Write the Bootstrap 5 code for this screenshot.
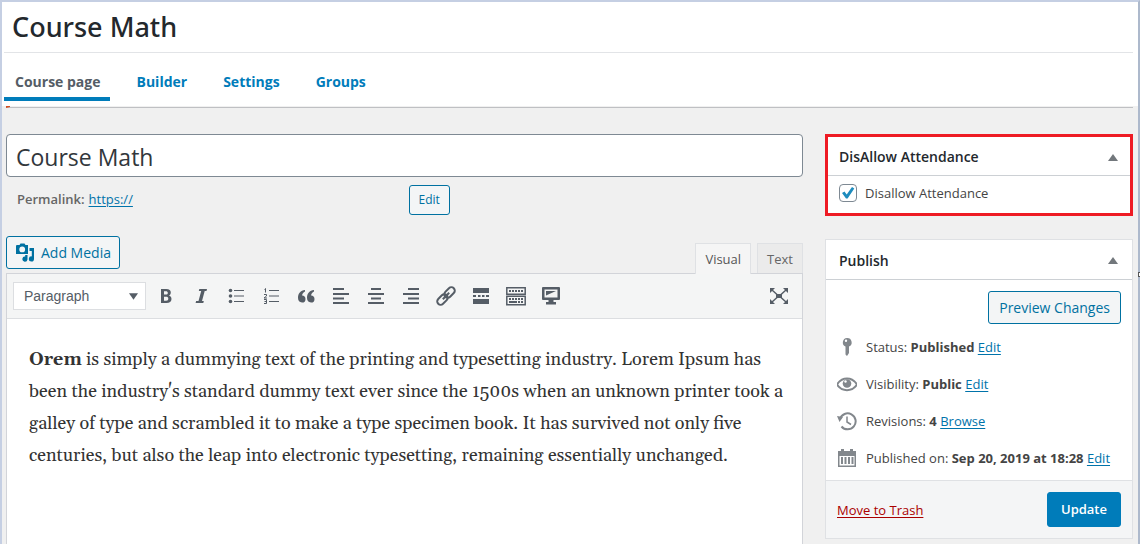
<!DOCTYPE html>
<html lang="en">
<head>
<meta charset="utf-8">
<meta name="viewport" content="width=device-width, initial-scale=1">
<title>Course Math</title>
<link href="https://cdn.jsdelivr.net/npm/bootstrap@5.3.0/dist/css/bootstrap.min.css" rel="stylesheet">
<style>
  body { font-family: "Open Sans", "Noto Sans", sans-serif; font-size: 13px; line-height: 20px; color: #444; background: #f0f0f0; }
  a { color: #0073aa; text-underline-offset: 2px; }
  .shell { min-height: 100vh; border: solid #c5cfe3; border-width: 2px 2px 0 2px; border-right-color: #adb9cc; }
  .resize-handle { position: absolute; right: -2px; top: 270px; width: 2px; height: 5px; background: #fff; border: 1px solid #555; border-right: 0; }
  .page-head { background: #fff; height: 104px; }
  .page-head h1 { font-family: "Noto Sans", "Open Sans", sans-serif; font-size: 27px; line-height: 50px; font-weight: 500; color: #23282d; padding-left: 10px; }
  .course-tabs { border-top: 1px solid #e2e4e7; margin: 0 5px 0 2px; gap: 16px; }
  .course-tabs .nav-link { padding: 18px 9px 5px 11px; font-size: 14px; line-height: 21px; font-weight: 700; color: #007cba; border-bottom: 4px solid transparent; }
  .course-tabs .nav-link.active { color: #555d66; border-color: #007cba; }
  .notice-strip { height: 2px; margin: 0 5px 0 4px; border-bottom: 1px solid #bfc0c3; border-left: 4px solid #d54e21; }
  .content { padding: 26px 5px 0 4px; gap: 22px; }
  .main-col { min-width: 0; }
  .side { width: 308px; }
  .title-input { height: 43px; padding: 2px 9px 0; font-size: 23px; color: #32373c; border: 1px solid #7e8993; border-radius: 4px; }
  .permalink { padding: 8px 0 0 11px; height: 59px; font-weight: 600; color: #666; }
  .permalink-url { width: 320px; font-weight: 400; }
  .btn-line { --bs-btn-font-size: 14px; --bs-btn-color: #0071a1; --bs-btn-border-color: #0071a1; --bs-btn-bg: #f3f5f6; --bs-btn-border-radius: 3px; --bs-btn-line-height: 21px; --bs-btn-padding-x: 10px; --bs-btn-padding-y: 5px; --bs-btn-hover-color: #016087; --bs-btn-hover-bg: #f1f1f1; --bs-btn-hover-border-color: #016087; }
  .btn-slim { --bs-btn-font-size: 12px; --bs-btn-padding-x: 9px; --bs-btn-padding-y: 4px; --bs-btn-line-height: 20px; }
  .btn-media { --bs-btn-padding-x: 8px; }
  .btn-update { --bs-btn-font-size: 13px; --bs-btn-line-height: 21px; --bs-btn-padding-x: 13px; --bs-btn-padding-y: 6px; --bs-btn-color: #fff; --bs-btn-bg: #007cba; --bs-btn-border-color: #007cba; --bs-btn-hover-color: #fff; --bs-btn-hover-bg: #0071a1; --bs-btn-border-radius: 3px; --bs-btn-font-weight: 600; }
  .editor-head { height: 37px; }
  .mode-tabs { gap: 6px; }
  .mode-tab { height: 30px; padding: 0 9px; font-size: 13px; color: #666; background: #ebebeb; border: 1px solid #dfe1e4; border-bottom: 0; }
  .mode-tab.current { height: 31px; margin-bottom: -1px; color: #555; background: #f5f5f5; position: relative; }
  .editor { border: 1px solid #d2d4d9; border-bottom: 0; background: #fff; }
  .toolbar { height: 45px; background: #f4f5f5; border-bottom: 1px solid #dcdee1; padding: 0 13px 0 6px; }
  .format-select { width: 133px; height: 28px; padding: 0 10px; font-size: 14px; line-height: 26px; font-family: "Liberation Sans", sans-serif; color: #555d66; background-color: #fff; border: 1px solid #dcdee1; border-radius: 0; background-image: url("data:image/svg+xml,%3Csvg xmlns='http://www.w3.org/2000/svg' viewBox='0 0 10 7'%3E%3Cpath fill='%23555d66' d='M0 0h10L5 7z'/%3E%3C/svg%3E"); background-size: 9px 7px; background-position: right 7px center; }
  .tools { margin-left: 10px; gap: 15px; }
  .tool { border: 0; padding: 0; background: none; width: 20px; height: 20px; color: #555d66; line-height: 0; }
  .prose { padding: 25px 16px 24px 22px; font: 18px/32px Gelasio, Georgia, "Liberation Serif", serif; color: #333; }
  .panel { background: #fff; border: 1px solid #dfe1e4; }
  .panel-marked { border: 3px solid #ee1b24; margin-bottom: 23px; }
  .panel h2 { font-size: 14px; line-height: 20px; font-weight: 600; color: #23282d; }
  .panel-title { height: 40px; padding: 2px 14px 0 13px; border-bottom: 1px solid #ccd0d4; }
  .panel-marked .panel-title { height: 39px; padding: 2px 12px 0 11px; }
  .toggle { border: 0; background: none; padding: 0; line-height: 0; }
  .attendance { height: 37px; padding: 0 11px; gap: 8px; }
  .attendance .form-check-input { width: 18px; height: 18px; border: 1px solid #7e8993; border-radius: 4px; }
  .attendance .form-check-input:checked { background-color: #fff; background-size: 16px; background-image: url("data:image/svg+xml,%3Csvg xmlns='http://www.w3.org/2000/svg' viewBox='0 0 16 16'%3E%3Cpath fill='%231e8cbe' d='M2 8 4.500 6.500 6.700 9.500 12 2l2.300 1.400L7.600 13.500H6z'/%3E%3C/svg%3E"); }
  .preview-row { padding: 11px 11px 12px; }
  .publish-list { padding: 0 11px 12px; gap: 16px; }
  .publish-row { gap: 9px; height: 21px; }
  .publish-row svg { flex: none; }
  .publish-foot { background: #f4f5f6; border-top: 1px solid #dfe1e4; padding: 11px; }
  .trash { color: #a00; }
</style>
</head>
<body>
<div class="shell d-flex flex-column position-relative">
  <span class="resize-handle"></span>
  <header class="page-head">
    <h1 class="m-0">Course Math</h1>
    <nav class="nav course-tabs">
      <a class="nav-link active" href="#">Course page</a>
      <a class="nav-link" href="#">Builder</a>
      <a class="nav-link" href="#">Settings</a>
      <a class="nav-link" href="#">Groups</a>
    </nav>
  </header>
  <div class="notice-strip"></div>
  <main class="content d-flex flex-grow-1">
    <section class="main-col d-flex flex-column flex-grow-1">
      <input class="form-control title-input" type="text" value="Course Math" aria-label="Title">
      <div class="permalink d-flex align-items-start">
        <span class="pt-1 me-1">Permalink:</span>
        <span class="permalink-url pt-1"><a href="#">https://</a></span>
        <button type="button" class="btn btn-line btn-slim">Edit</button>
      </div>
      <div class="editor-head d-flex align-items-start justify-content-between">
        <button type="button" class="btn btn-line btn-media d-flex align-items-center gap-1">
          <svg width="22" height="20" viewBox="0 0 22 20" fill="currentColor"><path fill-rule="evenodd" d="M3 2h1.500l1-1.500h4L10.500 2H13v9H1V3a1 1 0 0 1 1-1zM7.200 3.500a2.900 2.900 0 1 0 0 5.800 2.900 2.900 0 0 0 0-5.800z"/><path d="M14.500 5H19v11a2.600 2.600 0 1 1-2.200-2.600V8h-2.300zM12.500 12v4.500a2.600 2.600 0 1 1-2.300-3V12z"/></svg>
          <span>Add Media</span>
        </button>
        <div class="mode-tabs d-flex align-items-end align-self-end">
          <button type="button" class="mode-tab current">Visual</button>
          <button type="button" class="mode-tab">Text</button>
        </div>
      </div>
      <div class="editor flex-grow-1">
        <div class="toolbar d-flex align-items-center">
          <select class="form-select format-select" aria-label="Format"><option>Paragraph</option><option>Heading 1</option></select>
          <div class="tools d-flex">
            <button type="button" class="tool" aria-label="Bold"><svg width="20" height="20" viewBox="0 0 20 20" fill="currentColor"><path fill-rule="evenodd" d="M5 3h5.200c3.200 0 4.600 1.300 4.600 3.500 0 1.500-.7 2.700-2 3.100 1.700.4 2.700 1.600 2.700 3.400 0 2.600-1.900 4-5 4H5zm3 2.300v3.300h1.900c1.200 0 1.900-.6 1.900-1.700s-.7-1.600-2-1.600zm0 5.500v3.900h2.100c1.500 0 2.200-.7 2.200-2s-.8-1.900-2.300-1.900z"/></svg></button>
            <button type="button" class="tool" aria-label="Italic"><svg width="20" height="20" viewBox="0 0 20 20" fill="currentColor"><path d="M8.300 3H16l-.5 2h-1.800l-2.700 10h1.800l-.5 2H4.600l.5-2h2.400l2.700-10H7.800z"/></svg></button>
            <button type="button" class="tool" aria-label="Bulleted list"><svg width="20" height="20" viewBox="0 0 20 20" fill="currentColor"><circle cx="4.500" cy="4.500" r="1.800"/><circle cx="4.500" cy="10" r="1.800"/><circle cx="4.500" cy="15.500" r="1.800"/><path d="M8 4h10v1H8zM8 9.500h10v1H8zM8 15h10v1H8z"/></svg></button>
            <button type="button" class="tool" aria-label="Numbered list"><svg width="20" height="20" viewBox="0 0 20 20" fill="currentColor"><path d="M8 4h10v1H8zM8 9.500h10v1H8zM8 15h10v1H8z"/><path fill="none" stroke="currentColor" d="M3.500 3.500l1-1v4M3 8.500h2.500V10L3 12h3M3 13.500h2.500v4H3M3.500 15.500h2"/></svg></button>
            <button type="button" class="tool" aria-label="Quote"><svg width="20" height="20" viewBox="0 0 20 20" fill="currentColor"><path id="q" d="M9 4C4.500 4.600 2 7.500 2 11.800 2 14.600 3.500 16.500 6 16.500a3.500 3.500 0 0 0 3.500-3.600c0-2-1.300-3.300-3.400-3.400C6.200 7.600 7.300 6.200 9 5.400z"/><use href="#q" x="9"/></svg></button>
            <button type="button" class="tool" aria-label="Align left"><svg width="20" height="20" viewBox="0 0 20 20" stroke="currentColor" stroke-width="2"><path d="M2 3h11M2 8h16M2 12.500h11M2 17h16"/></svg></button>
            <button type="button" class="tool" aria-label="Align center"><svg width="20" height="20" viewBox="0 0 20 20" stroke="currentColor" stroke-width="2"><path d="M5 3h10M2 8h16M5 12.500h10M2 17h16"/></svg></button>
            <button type="button" class="tool" aria-label="Align right"><svg width="20" height="20" viewBox="0 0 20 20" stroke="currentColor" stroke-width="2"><path d="M7 3h11M2 8h16M7 12.500h11M2 17h16"/></svg></button>
            <button type="button" class="tool" aria-label="Link"><svg width="20" height="20" viewBox="0 0 20 20" fill="none" stroke="currentColor" stroke-width="2"><g transform="rotate(-45 10 10)"><rect x="-1" y="6.600" width="12" height="6.800" rx="3.400"/><rect x="9" y="6.600" width="12" height="6.800" rx="3.400"/><path d="M5.500 10h9"/></g></svg></button>
            <button type="button" class="tool" aria-label="Read more"><svg width="20" height="20" viewBox="0 0 20 20" fill="currentColor"><path d="M2 2h16v5H2zM2 9h3v2H2zM7 9h2.500v2H7zM11 9h2.500v2H11zM15 9h3v2h-3zM2 13h16v5H2z"/></svg></button>
            <button type="button" class="tool" aria-label="Toolbar toggle"><svg width="20" height="20" viewBox="0 0 20 20" fill="none" stroke="currentColor"><path stroke-width="1.500" d="M.8 1.800h18.400v6.400H.8zM.8 10.300h18.400v8.400H.8z"/><path stroke-width="2" stroke-dasharray="2 1" d="M3 5h14M3 13h14"/><path stroke-width="2" d="M3 16h8M12 16h2M15 16h2"/></svg></button>
            <button type="button" class="tool" aria-label="Preview"><svg width="20" height="20" viewBox="0 0 20 20" fill="currentColor"><path fill-rule="evenodd" d="M2 1h16a1 1 0 0 1 1 1v11a1 1 0 0 1-1 1h-5.500v2H15v2.500H5V16h2.500v-2H2a1 1 0 0 1-1-1V2a1 1 0 0 1 1-1zm1.500 2.500v8h13v-8z"/><path d="M5 5h10L5 9.500z"/></svg></button>
          </div>
          <button type="button" class="tool ms-auto" aria-label="Fullscreen"><svg width="20" height="20" viewBox="0 0 20 20" fill="currentColor"><path d="M7 8h6v4H7zM1 2h5L1 7zM19 2v5l-5-5zM1 18v-5l5 5zM19 18h-5l5-5z"/><path stroke="currentColor" stroke-width="1.500" d="M3 4l5 4.500M17 4l-5 4.500M3 16l5-4.500M17 16l-5-4.500"/></svg></button>
        </div>
        <div class="prose"><strong>Orem</strong> is simply a dummying text of the printing and typesetting industry. Lorem Ipsum has been the industry's standard dummy text ever since the 1500s when an unknown printer took a galley of type and scrambled it to make a type specimen book. It has survived not only five centuries, but also the leap into electronic typesetting, remaining essentially unchanged.</div>
      </div>
    </section>
    <aside class="side flex-shrink-0">
      <section class="panel panel-marked">
        <div class="panel-title d-flex align-items-center justify-content-between">
          <h2 class="m-0">DisAllow Attendance</h2>
          <button type="button" class="toggle" aria-label="Collapse"><svg width="10" height="7" viewBox="0 0 10 7" fill="#72777c"><path d="M5 0l5 7H0z"/></svg></button>
        </div>
        <div class="attendance d-flex align-items-center pb-1">
          <input class="form-check-input m-0" type="checkbox" id="disallow" checked>
          <label for="disallow">Disallow Attendance</label>
        </div>
      </section>
      <section class="panel">
        <div class="panel-title d-flex align-items-center justify-content-between">
          <h2 class="m-0">Publish</h2>
          <button type="button" class="toggle" aria-label="Collapse"><svg width="10" height="7" viewBox="0 0 10 7" fill="#72777c"><path d="M5 0l5 7H0z"/></svg></button>
        </div>
        <div class="preview-row d-flex justify-content-end">
          <button type="button" class="btn btn-line">Preview Changes</button>
        </div>
        <div class="publish-list d-flex flex-column">
          <div class="publish-row d-flex align-items-center">
            <svg width="20" height="20" viewBox="0 0 20 20" fill="#82878c"><path fill-rule="evenodd" d="M10 1a4.500 4.500 0 0 1 2 8.600V16l-2 3-1.500-1.500V9.600A4.500 4.500 0 0 1 10 1zm-1 1.500a1.200 1.200 0 1 0 0 2.400 1.200 1.200 0 0 0 0-2.400z"/></svg>
            <span>Status: <b>Published</b> <a href="#">Edit</a></span>
          </div>
          <div class="publish-row d-flex align-items-center">
            <svg width="20" height="20" viewBox="0 0 20 20"><path fill="#fff" stroke="#82878c" stroke-width="2" d="M0 10.500C5 2.500 15 2.500 20 10.500 15 18 5 18 0 10.500z"/><circle cx="10" cy="9.500" r="4.300" fill="#82878c"/><circle cx="8.500" cy="7.500" r="1.200" fill="#fff"/></svg>
            <span>Visibility: <b>Public</b> <a href="#">Edit</a></span>
          </div>
          <div class="publish-row d-flex align-items-center">
            <svg width="20" height="20" viewBox="0 0 20 20" fill="none" stroke="#82878c" stroke-width="2"><path d="M3 8a8 8 0 1 1 1.500 7.500"/><path d="M10 5.500V11l4 2.500" stroke-width="1.500"/><path fill="#82878c" stroke="none" d="M0 5l6 1-3.500 5z"/></svg>
            <span>Revisions: <b>4</b> <a href="#">Browse</a></span>
          </div>
          <div class="publish-row d-flex align-items-center">
            <svg width="20" height="20" viewBox="0 0 20 20" fill="#82878c"><path fill-rule="evenodd" d="M1 3h3V1h3v2h6V1h3v2h3v16H1zm1.500 5v9.500h15V8zM4 9h2v7H4zm3.500 0h2v7h-2zm3.500 0h2v7h-2zm3.500 0h2v7h-2z"/></svg>
            <span class="text-nowrap">Published on: <b>Sep 20, 2019 at 18:28</b> <a href="#">Edit</a></span>
          </div>
        </div>
        <div class="publish-foot d-flex justify-content-between align-items-center">
          <a class="trash" href="#">Move to Trash</a>
          <button type="button" class="btn btn-update">Update</button>
        </div>
      </section>
    </aside>
  </main>
</div>
<script src="https://cdn.jsdelivr.net/npm/bootstrap@5.3.0/dist/js/bootstrap.bundle.min.js"></script>
</body>
</html>
